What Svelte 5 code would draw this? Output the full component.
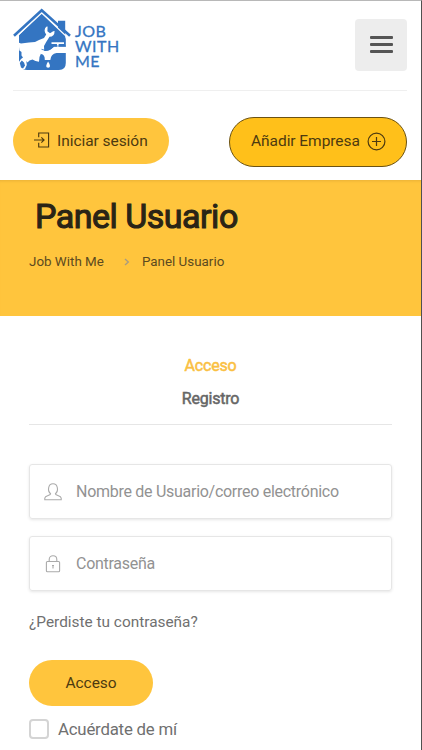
<script>
  let username = $state('');
  let password = $state('');
  let remember = $state(false);
  let activeTab = $state('login');

  const tabs = [
    { id: 'login', label: 'Acceso' },
    { id: 'register', label: 'Registro' },
  ];
</script>

<div class="page">
  <header>
    <div class="top">
      <a class="logo" href="#home" aria-label="Job With Me">
        <svg width="58" height="64" viewBox="0 0 58 64">
          <!-- house and chimney -->
          <path d="M28.5 5 L45 20.5 V12.8 H52.2 V29 L52.8 31 V55 Q52.8 62 46 62 H14 Q6 62 6 54 V27 Z" fill="#3475c2" />
          <path d="M2 30.2 L28.7 5 L54 29" fill="none" stroke="#fff" stroke-width="1.1" />
          <path d="M1 27.8 L28.7 2.2 L57 27.8" fill="none" stroke="#3475c2" stroke-width="2.6" />
          <!-- map shape with the wrench over it -->
          <path d="M4 34 L8 35.4 L16 34.4 L22 34 L26 32 L31 30 L33.2 26.5 Q30 22.4 33.2 18.8 L34.6 18.4 L34.4 23.2 L37 25.3 L40.2 23.2 L41.6 23 Q41.6 28.8 36.5 28.8 L33.2 34 L31 38 L31.2 42.5 L28 45.5 L26.5 49 L26 53.8 L22.5 53 L19.5 51.5 L16.5 52.5 L14.5 54.5 L13.3 53 L13.8 57 L12 61 L9.5 62 L6 59 L5.5 54.5 L8 51 L10 49.5 L8.5 47.5 L8.5 44 L6.4 42.5 L6 39 Z" fill="#fff" />
          <path d="M6.8 55 L8.8 52.5 L11 54.5 L12 57.5 L10 60.5 L8 59.5 Z" fill="#3475c2" />
          <!-- tap -->
          <path d="M28 42 Q35 45 41 38.8 H53 V45 H43.5 Q37.8 46 37.3 52 H31.8 Q32 46.5 28 46 Z" fill="#fff" />
          <path d="M38.5 35.2 H51 M44.8 35.2 V40" fill="none" stroke="#fff" stroke-width="1.7" />
          <path d="M28.5 41.3 Q35.5 44.2 41.2 38 H53" fill="none" stroke="#3475c2" stroke-width=".8" />
          <path d="M35.1 53.5 Q39 59.5 35.1 59.8 Q31.3 59.5 35.1 53.5Z" fill="#fff" />
        </svg>
        <span class="logo-text"><b>JOB</b><b>WITH</b><b>ME</b></span>
      </a>
      <button class="menu" aria-label="Menu">
        <i></i><i></i><i></i>
      </button>
    </div>
    <div class="actions">
      <a class="pill signin" href="#login">
        <svg width="16" height="16" viewBox="0 0 17 17" fill="none" stroke="currentColor" stroke-width="1.2">
          <path d="M5 5.5 V1 H15.5 V16 H5 V11.5 M0 8.5 H10.5 M7.8 5.7 L10.7 8.5 L7.8 11.3" />
        </svg>
        <span>Iniciar sesión</span>
      </a>
      <a class="pill add" href="#add">
        <span>Añadir Empresa</span>
        <svg width="19" height="19" viewBox="0 0 19 19" fill="none" stroke="currentColor" stroke-width="1.2">
          <circle cx="9.5" cy="9.5" r="8.4" />
          <path d="M9.5 5 V14 M5 9.5 H14" />
        </svg>
      </a>
    </div>
  </header>

  <section class="titlebar">
    <h1>Panel Usuario</h1>
    <nav>
      <a href="#home">Job With Me</a>
      <svg width="6" height="8" viewBox="0 0 6 8" fill="none" stroke="#a99c80" stroke-width="1.4">
        <path d="M1 1 L4.3 4 L1 7" />
      </svg>
      <span>Panel Usuario</span>
    </nav>
  </section>

  <main>
    <div class="tabs">
      {#each tabs as tab}
        <button class:active={activeTab === tab.id} onclick={() => (activeTab = tab.id)}>{tab.label}</button>
      {/each}
    </div>

    <form onsubmit={(e) => e.preventDefault()}>
      <label class="field">
        <svg width="18" height="18" viewBox="0 0 18 18" fill="none" stroke="#aaa" stroke-width="1.1">
          <path d="M6.6 10.7 C3.2 8 4 .8 9 .8 C14 .8 14.8 8 11.4 10.7 C11.2 12.8 16.8 12.2 17.2 15 V16.7 H.8 V15 C1.2 12.2 6.8 12.8 6.6 10.7 Z" />
        </svg>
        <input type="text" placeholder="Nombre de Usuario/correo electrónico" bind:value={username} />
      </label>
      <label class="field">
        <svg width="18" height="18" viewBox="0 0 18 18" fill="none" stroke="#aaa" stroke-width="1.1">
          <rect x="2.4" y="6.5" width="13.2" height="10.2" rx="1" />
          <path d="M5.2 6.5 V4.5 C5.2 -.6 12.8 -.6 12.8 4.5 V6.5" />
          <path d="M9 10 V13.5 M8 10.5 H10" />
        </svg>
        <input type="password" placeholder="Contraseña" bind:value={password} />
      </label>
      <a class="lost" href="#lost">¿Perdiste tu contraseña?</a>
      <button class="pill submit" type="submit">Acceso</button>
      <label class="remember">
        <input type="checkbox" bind:checked={remember} />
        <span>Acuérdate de mí</span>
      </label>
    </form>
  </main>
</div>

<style>
  :global(body) {
    background: #fff;
    overflow: hidden;
  }

  .page {
    box-sizing: border-box;
    width: 422px;
    height: 750px;
    overflow: hidden;
    border-top: 1px solid #b8b8b8;
    border-right: 1px solid #505050;
    font-family: Roboto, 'Liberation Sans', sans-serif;
    color: #666;
  }

  a {
    color: inherit;
    text-decoration: none;
  }

  button {
    border: 0;
    padding: 0;
    font-family: inherit;
    cursor: pointer;
  }

  svg {
    display: block;
    flex: none;
  }

  header {
    box-sizing: border-box;
    height: 179px;
    padding: 0 14px 0 13px;
  }

  .top {
    box-sizing: border-box;
    height: 90px;
    display: flex;
    justify-content: space-between;
    align-items: flex-start;
    padding-top: 7px;
    border-bottom: 1px solid #efefef;
  }

  .logo {
    display: flex;
    gap: 4px;
  }

  .logo-text {
    display: flex;
    flex-direction: column;
    padding-top: 15px;
    font: 16px/15px Lato, sans-serif;
    letter-spacing: 0.5px;
    color: #3475c2;
    -webkit-text-stroke: 0.3px #3475c2;
  }

  .logo-text b {
    font-weight: 400;
  }

  .menu {
    width: 52px;
    height: 52px;
    margin-top: 11px;
    padding-bottom: 2px;
    border-radius: 4px;
    background: #ededed;
    display: flex;
    flex-direction: column;
    align-items: center;
    justify-content: center;
    gap: 4px;
  }

  .menu i {
    width: 23px;
    height: 3px;
    border-radius: 1px;
    background: #555;
  }

  .actions {
    display: flex;
    justify-content: space-between;
    align-items: flex-start;
    padding-top: 26px;
  }

  .pill {
    box-sizing: border-box;
    display: flex;
    align-items: center;
    border-radius: 25px;
    background: #ffc53d;
    color: #4d3a10;
    font-size: 15.5px;
    letter-spacing: -0.05px;
  }

  .signin {
    width: 156px;
    height: 46px;
    margin-top: 1px;
    padding: 0 0 1px 21px;
    gap: 7px;
  }

  .signin svg {
    margin-bottom: 2px;
  }

  .add {
    width: 178px;
    height: 50px;
    padding: 0 0 2px 21px;
    gap: 7px;
    border: 1px solid #6b5213;
    background: #ffc01a;
  }

  .titlebar {
    box-sizing: border-box;
    height: 136px;
    padding: 15px 29px 0;
    background: #ffc53d;
    box-shadow: inset 0 3px 3px -2px #e9b036;
  }

  h1 {
    margin: 0 0 0 6px;
    font-size: 34px;
    line-height: 42px;
    font-weight: 400;
    letter-spacing: -0.5px;
    color: #2a2416;
    -webkit-text-stroke: 1.1px #2a2416;
  }

  nav {
    display: flex;
    align-items: center;
    margin-top: 16px;
    font-size: 13.4px;
    line-height: 18px;
    color: #5c4a20;
  }

  nav svg {
    margin: 0 12px 1px 20px;
  }

  main {
    padding: 33px 29px 0;
  }

  .tabs {
    display: flex;
    flex-direction: column;
    align-items: center;
    height: 75px;
    border-bottom: 1px solid #e6e6e6;
  }

  .tabs button {
    height: 33px;
    background: none;
    font-size: 16px;
    letter-spacing: -0.2px;
    color: #666;
    -webkit-text-stroke: 0.5px currentColor;
  }

  .tabs .active {
    color: #fac042;
  }

  form {
    display: flex;
    flex-direction: column;
    align-items: flex-start;
    padding-top: 39px;
  }

  .field {
    box-sizing: border-box;
    width: 363px;
    height: 55px;
    margin-bottom: 17px;
    padding: 0 15px 0 14px;
    display: flex;
    align-items: center;
    gap: 14px;
    border: 1px solid #e6e6e6;
    border-radius: 3px;
    box-shadow: 0 1px 3px rgba(0, 0, 0, 0.1);
  }

  .field input {
    flex: 1;
    min-width: 0;
    border: 0;
    outline: 0;
    padding: 0;
    background: none;
    font: 16px Roboto, sans-serif;
    letter-spacing: -0.28px;
    color: #666;
  }

  .field input::placeholder {
    color: #929292;
  }

  .lost {
    margin-top: 4px;
    font-size: 15.4px;
    line-height: 20px;
    color: #707070;
  }

  .submit {
    width: 124px;
    height: 46px;
    margin-top: 28px;
    justify-content: center;
  }

  .remember {
    display: flex;
    align-items: center;
    gap: 9px;
    margin-top: 12px;
    font-size: 16.8px;
    line-height: 22px;
    letter-spacing: -0.2px;
    color: #707070;
  }

  .remember input {
    appearance: none;
    box-sizing: border-box;
    width: 20px;
    height: 20px;
    margin: 0;
    border: 2px solid #d4d4d4;
    border-radius: 4px;
  }
</style>
